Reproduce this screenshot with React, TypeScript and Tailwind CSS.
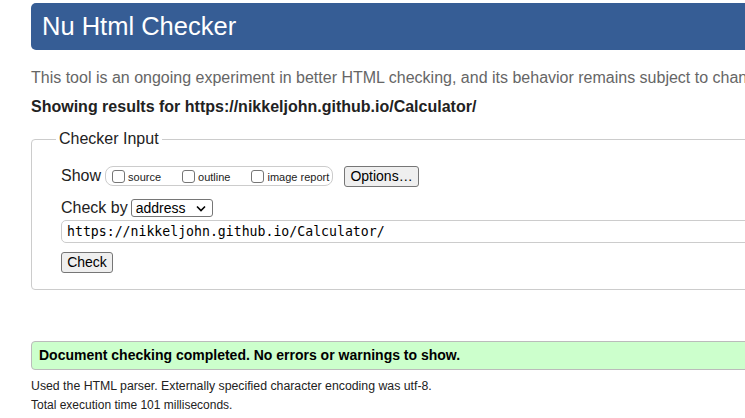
import React from "react";

function Box({ label }: { label: string }) {
  return (
    <span className="flex items-center">
      <span className="inline-block w-[13px] h-[13px] border border-[#767676] rounded-[3px] bg-white" />
      <span className="ml-[3px] text-[11px] text-[#222] leading-[13px] mt-[2px]">{label}</span>
    </span>
  );
}

export default function App() {
  return (
    <div
      className="w-[745px] h-[418px] overflow-hidden bg-white text-[#222]"
      style={{ fontFamily: '"Liberation Sans", Arial, sans-serif' }}
    >
      <div className="pl-[31px] pt-[3px] w-[900px]">
        <h1 className="h-[47px] bg-[#365d95] rounded-l-[5px] pl-[11px] text-white text-[25.5px] leading-[47px]">
          Nu Html Checker
        </h1>
        <p className="mt-[18px] text-[16px] leading-[20px] text-[#666] whitespace-nowrap">
          This tool is an ongoing experiment in better HTML checking, and its behavior remains subject to change
        </p>
        <p className="mt-[9px] text-[16px] leading-[20px] font-bold whitespace-nowrap">
          Showing results for https://nikkeljohn.github.io/Calculator/
        </p>
        <fieldset className="mt-[12px] border border-[#cccccc] rounded-[4px] pl-[29px] pb-[16px] w-[860px]">
          <legend className="-ml-[5px] px-[3px] text-[16px] leading-[20px]">Checker Input</legend>
          <div className="mt-[16px] flex items-center h-[22px]">
            <span className="text-[16px]">Show</span>
            <div className="ml-[4px] h-[20px] w-[228px] border border-[#cccccc] rounded-[8px] flex items-center pl-[6px] gap-[21px]">
              <Box label="source" />
              <Box label="outline" />
              <Box label="image report" />
            </div>
            <button className="ml-[11px] h-[21px] w-[75px] border border-[#767676] rounded-[3px] bg-[#efefef] text-[14px] leading-[19px] text-black">
              Options…
            </button>
          </div>
          <div className="mt-[11px] flex items-center h-[20px]">
            <span className="text-[16px]">Check by</span>
            <div className="ml-[3px] h-[18px] w-[82px] border border-[#767676] rounded-[3px] bg-white flex items-center justify-between pl-[4px] pr-[6px]">
              <span className="text-[14px] leading-[16px] text-black">address</span>
              <svg width="10" height="7" viewBox="0 0 10 7">
                <path d="M1 1.5 L5 5.5 L9 1.5" fill="none" stroke="#000" strokeWidth="1.6" />
              </svg>
            </div>
          </div>
          <div
            className="mt-[2px] h-[23px] w-[800px] border border-[#cccccc] rounded-[5px] pl-[5px] flex items-center text-[13.2px] text-black"
            style={{ fontFamily: '"DejaVu Sans Mono", "Liberation Mono", monospace' }}
          >
            https://nikkeljohn.github.io/Calculator/
          </div>
          <button className="mt-[9px] block h-[21px] w-[52px] border border-[#767676] rounded-[3px] bg-[#efefef] text-[14px] leading-[19px] text-black">
            Check
          </button>
        </fieldset>
        <div className="mt-[51px] h-[29px] w-[860px] bg-[#ccffcc] border border-[#bbbbbb] rounded-[4px] pl-[7px] flex items-center text-[14px] font-bold text-black">
          Document checking completed. No errors or warnings to show.
        </div>
        <p className="mt-[6px] text-[12.3px] leading-[20px] text-[#222]">
          Used the HTML parser. Externally specified character encoding was utf-8.
        </p>
        <p className="text-[12px] leading-[19px] text-[#222]">Total execution time 101 milliseconds.</p>
      </div>
    </div>
  );
}
